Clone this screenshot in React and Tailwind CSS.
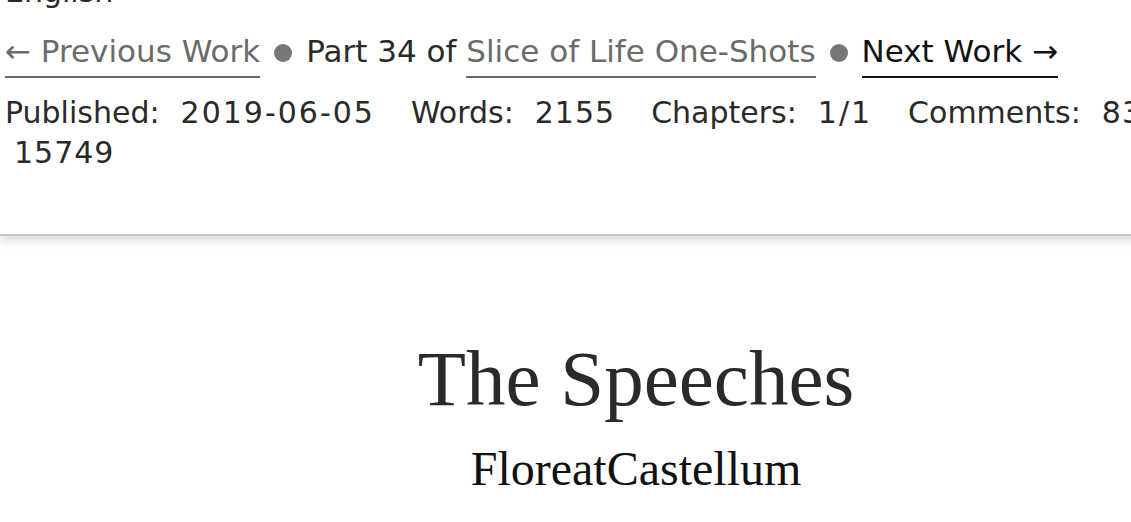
import React from 'react';

const stats = [
  ['Published:', '2019-06-05', 'tracking-[2px]'],
  ['Words:', '2155', 'tracking-[1px]'],
  ['Chapters:', '1/1', 'tracking-[2px]'],
  ['Comments:', '83', 'tracking-[1px]'],
  ['Kudos:', '1204', 'tracking-[1px]'],
  ['Hits:', '', ''],
];

const Bullet = () => (
  <span className="inline-block w-[18px] h-[18px] rounded-full bg-[#777] mx-[14px] align-baseline" />
);

const App = () => {
  return (
    <div className="w-[1131px] h-[522px] overflow-hidden bg-white">
      <div className="w-[1272px]">
        {/* work meta header */}
        <div className="border-b-2 border-[#c6c6c6] shadow-[0_5px_9px_rgba(0,0,0,0.13)] pb-[61px] px-[5px] text-[30px] leading-[40px] text-[#2a2a2a] font-['DejaVu_Sans',sans-serif]">
          <div className="-mt-[28px]">English</div>
          <div className="mt-[19px] whitespace-nowrap text-[31px]">
            <span className="text-[#6b6b6b] border-b-2 border-[#6b6b6b] pb-[7px]">← Previous Work</span>
            <Bullet />
            <span>Part 34 of </span>
            <span className="text-[#6b6b6b] border-b-2 border-[#6b6b6b] pb-[7px]">Slice of Life One-Shots</span>
            <Bullet />
            <span className="text-[#111] border-b-2 border-[#111] pb-[7px]">Next Work →</span>
          </div>
          <dl className="mt-[22px]">
            <div className="flex whitespace-nowrap">
              {stats.map(([k, v, t]) => (
                <div key={k} className="flex mr-[36px]">
                  <dt>{k}</dt>
                  {v && <dd className={`ml-[21px] ${t}`}>{v}</dd>}
                </div>
              ))}
            </div>
            <dd className="pl-[9px] tracking-[1px]">15749</dd>
          </dl>
        </div>

        {/* preface */}
        <div className="mt-[103px] text-center font-['Liberation_Serif',serif]">
          <h2 className="text-[79px] leading-[80px] text-[#2a2a2a]">The Speeches</h2>
          <h3 className="mt-[27px] text-[48px] leading-[46px] text-[#111]">FloreatCastellum</h3>
        </div>
      </div>
    </div>
  );
};

export default App;
